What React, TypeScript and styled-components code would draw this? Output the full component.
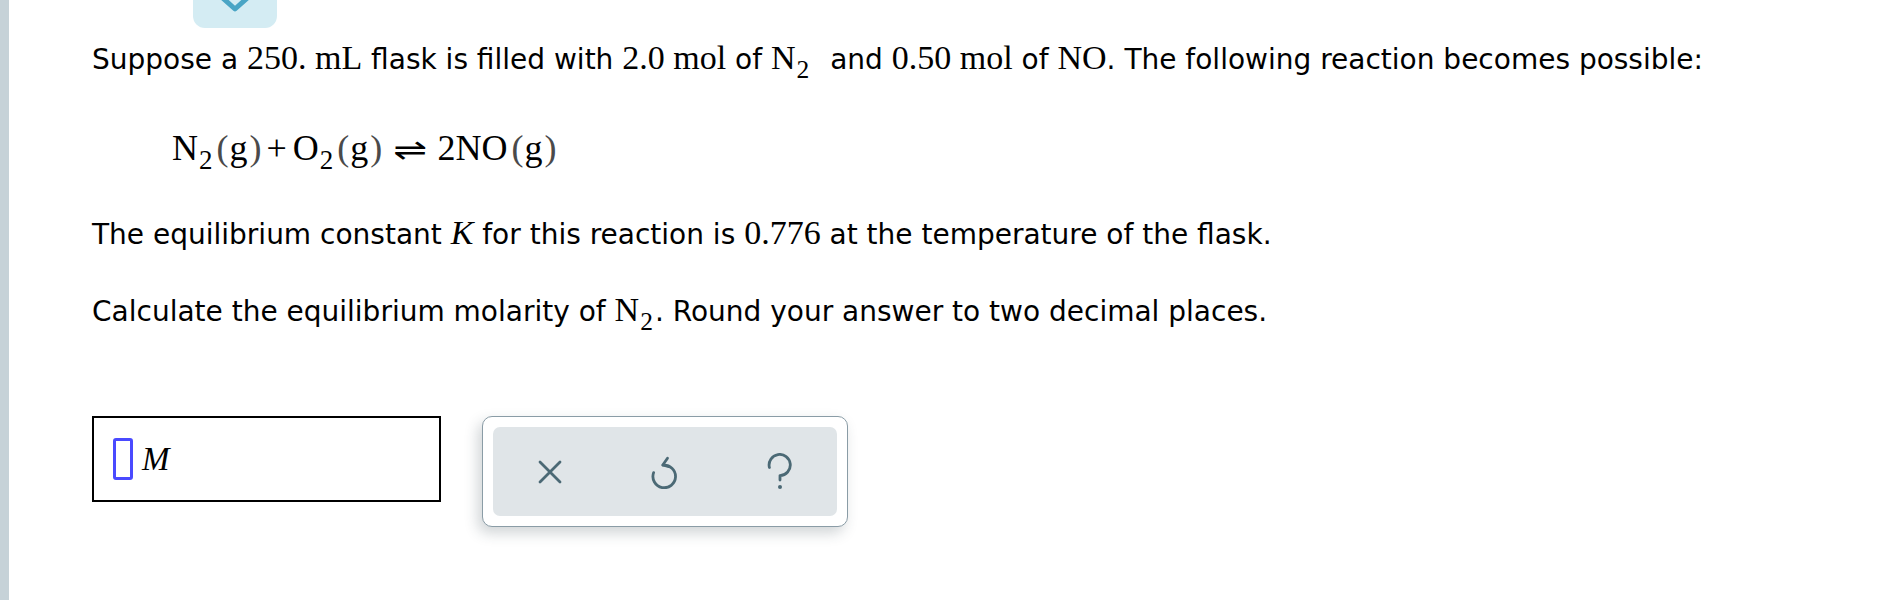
import React from "react";
import styled, { createGlobalStyle } from "styled-components";

const GlobalStyle = createGlobalStyle`
  html, body { margin: 0; padding: 0; background: #ffffff; }
  body { font-family: "DejaVu Sans", Verdana, sans-serif; }
`;

const Page = styled.div`
  display: flex;
  min-height: 600px;
  width: 1886px;
  overflow: hidden;
`;

const SideRail = styled.div`
  width: 9px;
  flex: none;
  background: #c6d2d8;
`;

const Content = styled.main`
  flex: 1;
  padding-left: 83px;
  display: flex;
  flex-direction: column;
  align-items: flex-start;
`;

const ToggleTab = styled.div`
  margin-left: 101px;
  width: 84px;
  height: 28px;
  background: #d4ecf3;
  border-radius: 0 0 12px 12px;
  display: flex;
  justify-content: center;
  overflow: hidden;
`;

const Text = styled.p<{ $top: number }>`
  margin: ${(p) => p.$top}px 0 0;
  font-family: "DejaVu Sans", Verdana, sans-serif;
  font-size: 28px;
  line-height: 36px;
  color: #000;
  white-space: nowrap;
`;

const MathSpan = styled.span<{ $italic?: boolean }>`
  font-family: "Liberation Serif", "Times New Roman", serif;
  font-size: 34px;
  font-style: ${(p) => (p.$italic ? "italic" : "normal")};
`;

const Sub = styled.span<{ $gap?: number }>`
  font-size: 0.75em;
  vertical-align: -0.34em;
  line-height: 0;
  margin-left: 1px;
  margin-right: ${(p) => p.$gap ?? 0}px;
`;

const Equation = styled.div`
  margin: 48px 0 0 80px;
  font-family: "Liberation Serif", "Times New Roman", serif;
  font-size: 36px;
  line-height: 44px;
  color: #000;
  white-space: nowrap;
`;

const Paren = styled.span<{ $side: "open" | "close" }>`
  color: #4a4a4a;
  margin: ${(p) => (p.$side === "open" ? "0 1px 0 4px" : "0 0 0 2px")};
`;

const Op = styled.span`
  margin: 0 6px 0 5px;
`;

const Arrow = styled.span`
  display: inline-block;
  font-family: "DejaVu Sans", sans-serif;
  font-size: 30px;
  transform: scaleX(1.35);
  margin: 0 14px 0 16px;
`;

const AnswerRow = styled.div`
  margin-top: 86px;
  display: flex;
  align-items: flex-start;
  gap: 41px;
`;

const AnswerBox = styled.div`
  box-sizing: border-box;
  width: 349px;
  height: 86px;
  border: 2px solid #000;
  display: flex;
  align-items: center;
  padding-left: 19px;
`;

const Cursor = styled.div`
  box-sizing: border-box;
  width: 20px;
  height: 42px;
  border: 3px solid #4a4aff;
  border-radius: 3px;
`;

const Unit = styled.span`
  margin-left: 9px;
  font-family: "Liberation Serif", "Times New Roman", serif;
  font-style: italic;
  font-size: 33px;
  line-height: 1;
`;

const ToolPanel = styled.div`
  box-sizing: border-box;
  width: 366px;
  height: 111px;
  border: 1.5px solid #8a9ca6;
  border-radius: 10px;
  padding: 10px;
  background: #fff;
  box-shadow: -4px 6px 14px rgba(40, 60, 70, 0.22);
  display: flex;
`;

const ToolTray = styled.div`
  flex: 1;
  background: #e0e5e8;
  border-radius: 7px;
  display: grid;
  grid-template-columns: repeat(3, 1fr);
  align-items: center;
  justify-items: center;
`;

const ToolButton = styled.button`
  background: none;
  border: none;
  padding: 0;
  display: flex;
  align-items: center;
  justify-content: center;
  color: #4b6975;
  cursor: pointer;
`;

const Chevron = () => (
  <svg width="40" height="14" viewBox="0 0 40 14" style={{ display: "block" }}>
    <polyline
      points="1,-8 20,9 39,-8"
      fill="none"
      stroke="#4aa5c5"
      strokeWidth="5"
      strokeLinecap="round"
      strokeLinejoin="round"
    />
  </svg>
);

const ClearIcon = () => (
  <svg width="24" height="24" viewBox="0 0 24 24">
    <path d="M2 2 L22 22 M22 2 L2 22" stroke="currentColor" strokeWidth="2.8" strokeLinecap="round" fill="none" />
  </svg>
);

const UndoIcon = () => (
  <svg width="30" height="34" viewBox="0 0 30 34">
    <path
      d="M13 10.2 A 11.3 11.3 0 1 1 3.6 17.6"
      stroke="currentColor"
      strokeWidth="2.8"
      strokeLinecap="round"
      fill="none"
    />
    <path
      d="M17.5 3.2 L12.8 10 L18.8 11.6"
      stroke="currentColor"
      strokeWidth="2.8"
      strokeLinecap="round"
      strokeLinejoin="round"
      fill="none"
    />
  </svg>
);

const HelpIcon = () => (
  <svg width="26" height="38" viewBox="0 0 26 38">
    <path
      d="M2.4 14.5 A 10.6 10.6 0 1 1 13 22.6 L13 27"
      stroke="currentColor"
      strokeWidth="2.8"
      strokeLinecap="round"
      strokeLinejoin="round"
      fill="none"
    />
    <circle cx="13" cy="34" r="2" fill="currentColor" />
  </svg>
);

export default function App() {
  return (
    <>
      <GlobalStyle />
      <Page>
        <SideRail />
        <Content>
          <ToggleTab>
            <Chevron />
          </ToggleTab>
          <Text $top={12}>
            Suppose a <MathSpan>250. mL</MathSpan> flask is filled with <MathSpan>2.0 mol</MathSpan> of{" "}
            <MathSpan>
              N<Sub $gap={12}>2</Sub>
            </MathSpan>{" "}
            and <MathSpan>0.50 mol</MathSpan> of <MathSpan>NO</MathSpan>. The following reaction becomes possible:
          </Text>
          <Equation>
            N<Sub>2</Sub>
            <Paren $side="open">(</Paren>g<Paren $side="close">)</Paren>
            <Op>+</Op>O<Sub>2</Sub>
            <Paren $side="open">(</Paren>g<Paren $side="close">)</Paren>
            <Arrow>⇌</Arrow>2NO<Paren $side="open">(</Paren>g<Paren $side="close">)</Paren>
          </Equation>
          <Text $top={43}>
            The equilibrium constant <MathSpan $italic>K</MathSpan> for this reaction is <MathSpan>0.776</MathSpan> at the
            temperature of the flask.
          </Text>
          <Text $top={39}>
            Calculate the equilibrium molarity of{" "}
            <MathSpan>
              N<Sub $gap={2}>2</Sub>
            </MathSpan>
            . Round your answer to two decimal places.
          </Text>
          <AnswerRow>
            <AnswerBox>
              <Cursor />
              <Unit>M</Unit>
            </AnswerBox>
            <ToolPanel>
              <ToolTray>
                <ToolButton aria-label="Clear">
                  <ClearIcon />
                </ToolButton>
                <ToolButton aria-label="Undo">
                  <UndoIcon />
                </ToolButton>
                <ToolButton aria-label="Help">
                  <HelpIcon />
                </ToolButton>
              </ToolTray>
            </ToolPanel>
          </AnswerRow>
        </Content>
      </Page>
    </>
  );
}
